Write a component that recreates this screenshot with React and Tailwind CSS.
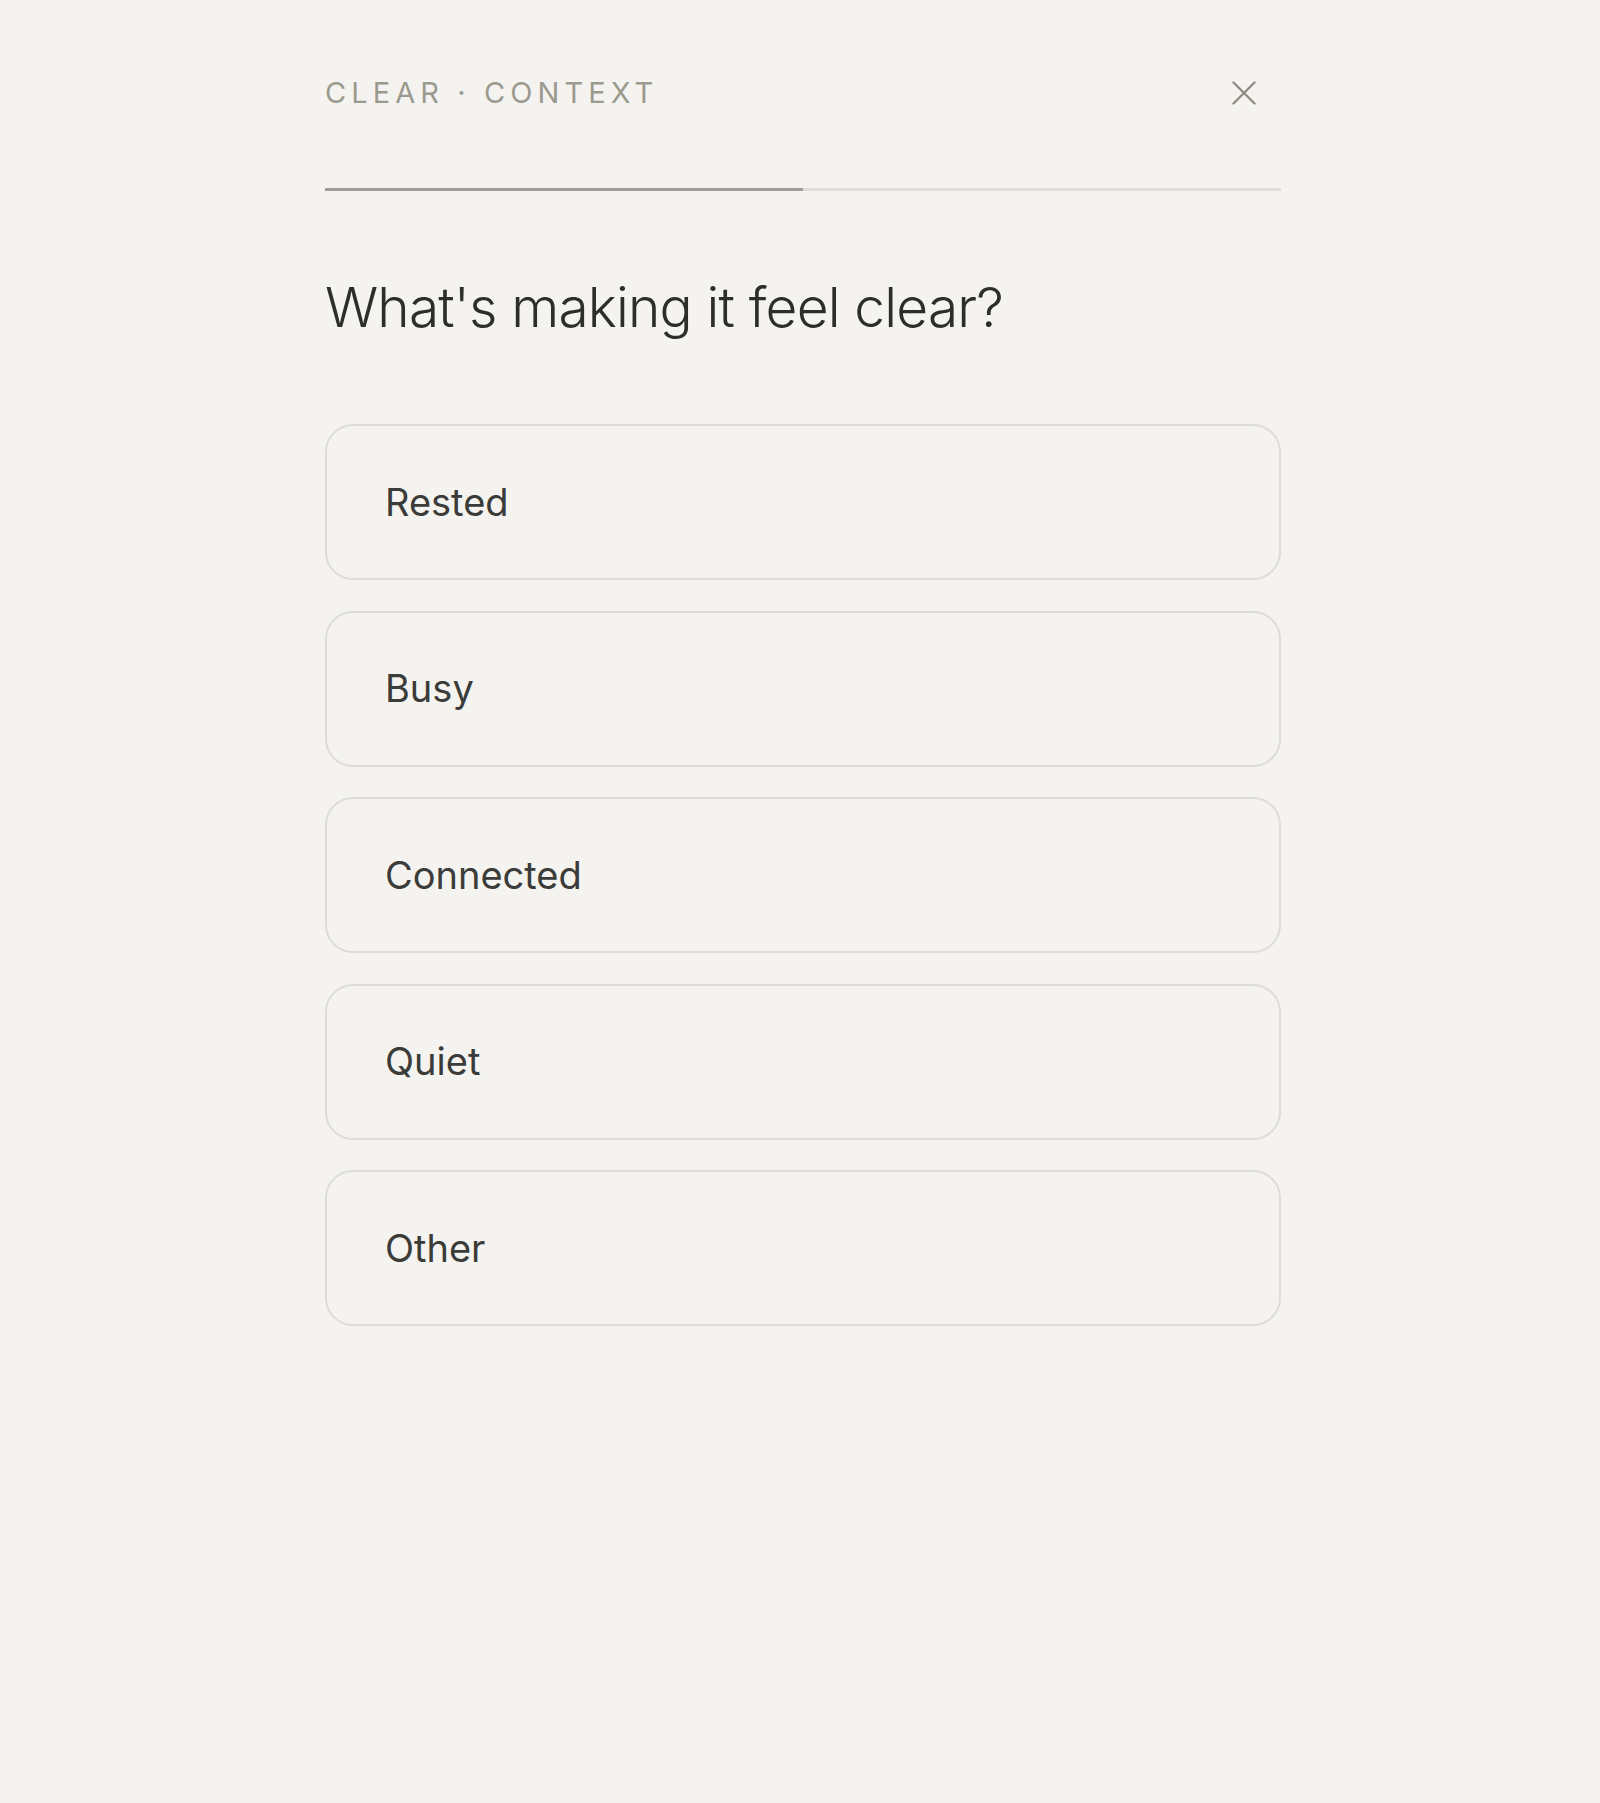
const options = ["Rested", "Busy", "Connected", "Quiet", "Other"];

export default function App() {
  return (
    <div className="min-h-screen bg-[#f4f3f0] font-['Inter','Liberation_Sans',sans-serif]">
      <div className="w-[956px] ml-[325px] pt-[79px]">
        {/* header */}
        <div className="flex items-center justify-between">
          <span className="text-[29px] leading-[28px] tracking-[0.175em] text-[#9b9a8f] uppercase">
            Clear · Context
          </span>
          <button type="button" className="mr-[25px] text-[#8e8d84]">
            <svg width="24" height="24" viewBox="0 0 24 24" fill="none">
              <path
                d="M1.5 1.5 22.5 22.5M22.5 1.5 1.5 22.5"
                stroke="currentColor"
                strokeWidth="2.4"
                strokeLinecap="round"
              />
            </svg>
          </button>
        </div>

        {/* progress */}
        <div className="mt-[81px] h-[3px] w-full bg-[#dfded8] flex">
          <div className="h-full w-[478px] bg-[#9e9d97]" />
        </div>

        <h1 className="mt-[88px] text-[55px] leading-[56px] font-light tracking-[-0.015em] text-[#2d2d2b]">
          What's making it feel clear?
        </h1>

        {/* options */}
        <div className="mt-[89px] flex flex-col gap-[30.5px]">
          {options.map((opt) => (
            <button
              key={opt}
              type="button"
              className="h-[156px] w-full flex items-center px-[58px] rounded-[28px] border-2 border-[#dedcd6] bg-[#f4f3f0] text-left text-[38px] text-[#3b3b39]"
            >
              {opt}
            </button>
          ))}
        </div>
      </div>
    </div>
  );
}
